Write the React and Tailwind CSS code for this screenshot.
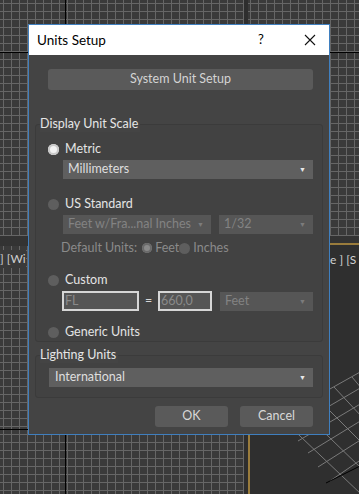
import React from 'react';

const font = { fontFamily: 'Lato, "Noto Sans", sans-serif' };

const Radio = ({ on, dim }) => {
    if (on && dim) return <span className="inline-block w-[10px] h-[10px] rounded-full bg-[#8a8a8a] ring-2 ring-inset ring-[#6a6a6a]"></span>;
    if (on) return <span className="inline-block w-[11px] h-[11px] rounded-full bg-[#f2f2f2] ring-2 ring-inset ring-[#c8c8c8]"></span>;
    return <span className="inline-block w-[11px] h-[11px] rounded-full bg-[#5e5e5e]"></span>;
};

const Select = ({ label, dim, className }) => (
    <div className={`h-[19px] flex items-center justify-between pl-[5px] pr-[7px] text-[12.5px] ${dim ? 'bg-[#565656] text-[#838383]' : 'bg-[#5f5f5f] text-[#dedede]'} ${className}`}>
        <span>{label}</span>
        <span className={`text-[7px] ${dim ? 'text-[#7c7c7c]' : 'text-[#e8e8e8]'}`}>▼</span>
    </div>
);

const gridBg = "bg-[#3a3a3a] bg-[linear-gradient(#666_1px,transparent_1px),linear-gradient(90deg,#666_1px,transparent_1px)] bg-[size:8px_8px]";

export default function App() {
    return (
        <div className="relative w-[359px] h-[494px] overflow-hidden bg-[#2c2c2c]" style={font}>
            {/* viewports */}
            <div className="flex h-full">
                <div className="w-[244px] flex flex-col">
                    <div className={`relative h-[236px] ${gridBg} bg-[position:3px_3px]`}>
                        <div className="absolute left-[65px] top-0 bottom-0 w-px bg-black"></div>
                        <div className="absolute top-[52px] left-0 right-0 h-px bg-black"></div>
                    </div>
                    <div className="h-[10px] bg-[#333]"></div>
                    <div className={`relative flex-1 ${gridBg} bg-[position:3px_4px]`}>
                        <div className="absolute left-[65px] top-0 bottom-0 w-px bg-black"></div>
                        <div className="absolute top-[183px] left-0 right-0 h-px bg-black"></div>
                        <div className="absolute left-0 top-[4px] text-[12px] text-[#cfcfcf] bg-[#3a3a3a]">] [Wi</div>
                    </div>
                </div>
                <div className="w-[4px] bg-[#2e2e2e]"></div>
                <div className="flex-1 flex flex-col">
                    <div className={`relative h-[236px] ${gridBg} bg-[position:2px_3px]`}>
                        <div className="absolute top-[52px] left-0 right-0 h-px bg-black"></div>
                    </div>
                    <div className="h-[7px] bg-[#333]"></div>
                    <div className="relative flex-1 bg-[#2f2f2f] border-l-2 border-t-2 border-[#9a7c3c]">
                        <div className="absolute left-[80px] top-[6px] text-[12px] text-[#d2d2d2]">e ] [S</div>
                        <svg className="absolute left-0 top-0" width="112" height="252" viewBox="0 0 112 252">
                            <g stroke="#7a7a7a" strokeWidth="1" fill="none">
                                <line x1="30" y1="172" x2="112" y2="126" />
                                <line x1="40" y1="184" x2="112" y2="142" />
                                <line x1="48" y1="196" x2="112" y2="158" />
                                <line x1="58" y1="208" x2="112" y2="175" />
                                <line x1="68" y1="222" x2="112" y2="194" />
                                <line x1="80" y1="236" x2="112" y2="214" />
                                <line x1="30" y1="172" x2="112" y2="250" />
                                <line x1="48" y1="162" x2="112" y2="224" />
                                <line x1="66" y1="152" x2="112" y2="198" />
                                <line x1="84" y1="142" x2="112" y2="172" />
                                <line x1="102" y1="132" x2="112" y2="144" />
                            </g>
                            <line x1="76" y1="238" x2="112" y2="220" stroke="#000" strokeWidth="1" />
                        </svg>
                    </div>
                </div>
            </div>

            {/* dialog */}
            <div className="absolute left-[28px] top-[24px] w-[302px] h-[411px] border border-[#3f7fbf] bg-[#444444] flex flex-col">
                <div className="h-[30px] bg-white flex items-center pl-[8px] text-[13.5px] text-black shrink-0">
                    <span className="flex-1">Units Setup</span>
                    <span className="w-[10px] text-center mr-[38px] text-[13px]">?</span>
                    <svg width="12" height="12" viewBox="0 0 12 12" className="mr-[13px]">
                        <path d="M1 1 L11 11 M11 1 L1 11" stroke="#111" strokeWidth="1.1" />
                    </svg>
                </div>
                <div className="pl-[19px] pr-[16px] pt-[14px]">
                    <div className="h-[21px] rounded-[3px] bg-[#5a5a5a] flex items-center justify-center text-[12.5px] text-[#d4d4d4]">System Unit Setup</div>
                </div>

                <div className="relative mx-[6px] mt-[34px] h-[218px] rounded-[3px] border border-[#3b3b3b] bg-[#424242]">
                    <div className="absolute -top-[9px] left-[4px] text-[12.5px] text-[#e6e6e6] bg-[#444] leading-[16px] pr-[2px]">Display Unit Scale</div>
                    <div className="pl-[12px] pr-[9px] pt-[16px] text-[12.5px] text-[#e4e4e4]">
                        <div className="flex items-center gap-[6px] h-[16px]"><Radio on /><span>Metric</span></div>
                        <Select label="Millimeters" className="ml-[15px] mt-[3px]" />
                        <div className="flex items-center gap-[6px] h-[16px] mt-[17px]"><Radio /><span>US Standard</span></div>
                        <div className="flex gap-[8px] ml-[15px] mt-[3px]">
                            <Select dim label="Feet w/Fra...nal Inches" className="w-[148px]" />
                            <Select dim label="1/32" className="flex-1" />
                        </div>
                        <div className="flex items-center ml-[13px] mt-[6px] h-[16px] text-[#8a8a8a]">
                            <span className="mr-[5px]">Default Units:</span>
                            <Radio on dim />
                            <span className="ml-[3px]">Feet</span>
                            <Radio />
                            <span className="ml-[3px]">Inches</span>
                        </div>
                        <div className="flex items-center gap-[6px] h-[16px] mt-[16px]"><Radio /><span>Custom</span></div>
                        <div className="flex items-center ml-[14px] mt-[3px]">
                            <div className="w-[77px] h-[20px] border-2 border-[#d6d6d6] bg-[#555] text-[#8a8a8a] flex items-center pl-[1px]">FL</div>
                            <span className="w-[19px] text-center text-[#d8d8d8]">=</span>
                            <div className="w-[54px] h-[20px] border-2 border-[#d6d6d6] bg-[#555] text-[#8a8a8a] flex items-center pl-[1px]">660,0</div>
                            <Select dim label="Feet" className="flex-1 ml-[8px]" />
                        </div>
                        <div className="flex items-center gap-[6px] h-[16px] mt-[13px]"><Radio /><span>Generic Units</span></div>
                    </div>
                </div>

                <div className="relative mx-[6px] mt-[13px] h-[43px] rounded-[3px] border border-[#3b3b3b] bg-[#424242]">
                    <div className="absolute -top-[9px] left-[4px] text-[12.5px] text-[#e6e6e6] bg-[#444] leading-[16px] pr-[2px]">Lighting Units</div>
                    <Select label="International" className="ml-[13px] mr-[9px] mt-[12px] pl-[6px]" />
                </div>

                <div className="flex justify-end gap-[12px] pl-[16px] pr-[16px] mt-[8px] text-[12.5px] text-[#d8d8d8]">
                    <div className="w-[73px] h-[21px] rounded-[3px] bg-[#5a5a5a] flex items-center justify-center">OK</div>
                    <div className="w-[73px] h-[21px] rounded-[3px] bg-[#5a5a5a] flex items-center justify-center">Cancel</div>
                </div>
            </div>
        </div>
    );
}
